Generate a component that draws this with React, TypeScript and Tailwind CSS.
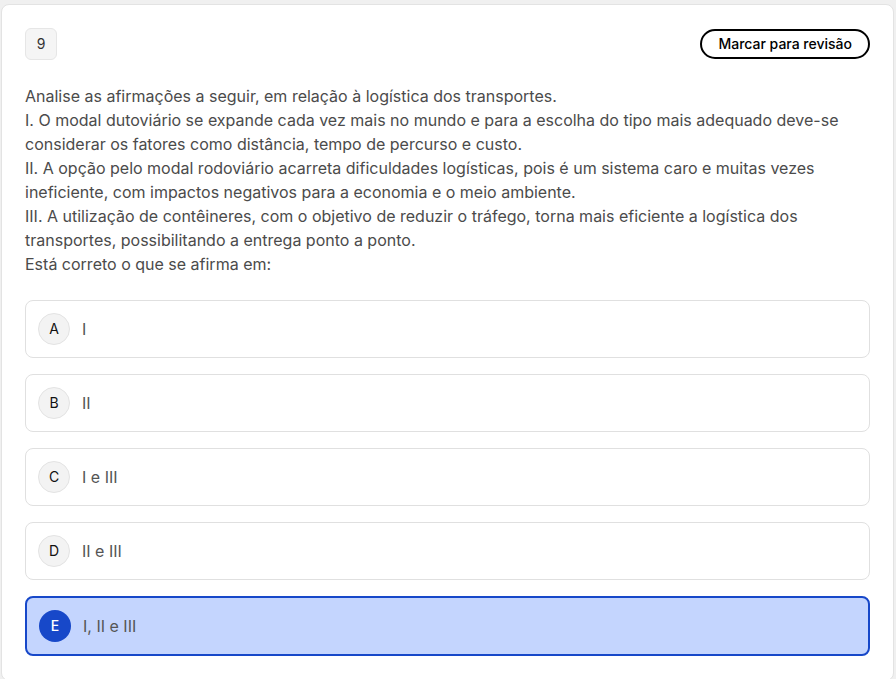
import React, { useState } from 'react';

const OPTIONS = [
  { letter: 'A', text: 'I' },
  { letter: 'B', text: 'II' },
  { letter: 'C', text: 'I e III' },
  { letter: 'D', text: 'II e III' },
  { letter: 'E', text: 'I, II e III' },
];

const STATEMENT = [
  'Analise as afirmações a seguir, em relação à logística dos transportes.',
  'I. O modal dutoviário se expande cada vez mais no mundo e para a escolha do tipo mais adequado deve-se considerar os fatores como distância, tempo de percurso e custo.',
  'II. A opção pelo modal rodoviário acarreta dificuldades logísticas, pois é um sistema caro e muitas vezes ineficiente, com impactos negativos para a economia e o meio ambiente.',
  'III. A utilização de contêineres, com o objetivo de reduzir o tráfego, torna mais eficiente a logística dos transportes, possibilitando a entrega ponto a ponto.',
  'Está correto o que se afirma em:',
];

const App: React.FC = () => {
  const [selected, setSelected] = useState('E');

  return (
    <div className="min-h-screen bg-[#f0f0f0] pl-px pr-[2px] pt-1 font-['Inter','Noto_Sans',sans-serif]">
      <div className="bg-white border border-[#e3e3e3] rounded-lg px-[23px] pt-[23px] pb-6">
        {/* Header */}
        <div className="flex items-center justify-between">
          <div className="w-8 h-8 rounded-md bg-[#f5f5f5] border border-[#e6e6e6] flex items-center justify-center text-sm text-[#333]">
            9
          </div>
          <button className="h-[30px] px-4 rounded-full border-2 border-black text-sm font-medium text-black bg-white">
            Marcar para revisão
          </button>
        </div>

        {/* Statement */}
        <div className="mt-6 text-base leading-6 text-[#4b4b4b]">
          {STATEMENT.map((line, i) => (
            <p key={i}>{line}</p>
          ))}
        </div>

        {/* Options */}
        <div className="mt-6 flex flex-col gap-4">
          {OPTIONS.map((opt) => {
            const active = selected === opt.letter;
            return (
              <button
                key={opt.letter}
                onClick={() => setSelected(opt.letter)}
                className={
                  active
                    ? 'flex items-center gap-3 h-[60px] px-3 rounded-lg border-2 border-[#1748c9] bg-[#c4d5fe] text-left'
                    : 'flex items-center gap-3 h-[58px] px-3 rounded-lg border border-[#e0e0e0] bg-white text-left'
                }
              >
                <span
                  className={
                    active
                      ? 'w-8 h-8 rounded-full bg-[#1748c9] text-white flex items-center justify-center text-sm font-medium'
                      : 'w-8 h-8 rounded-full bg-[#f3f3f3] border border-[#e3e3e3] text-[#111] flex items-center justify-center text-sm'
                  }
                >
                  {opt.letter}
                </span>
                <span className="text-base text-[#555]">{opt.text}</span>
              </button>
            );
          })}
        </div>
      </div>
    </div>
  );
};

export default App;
